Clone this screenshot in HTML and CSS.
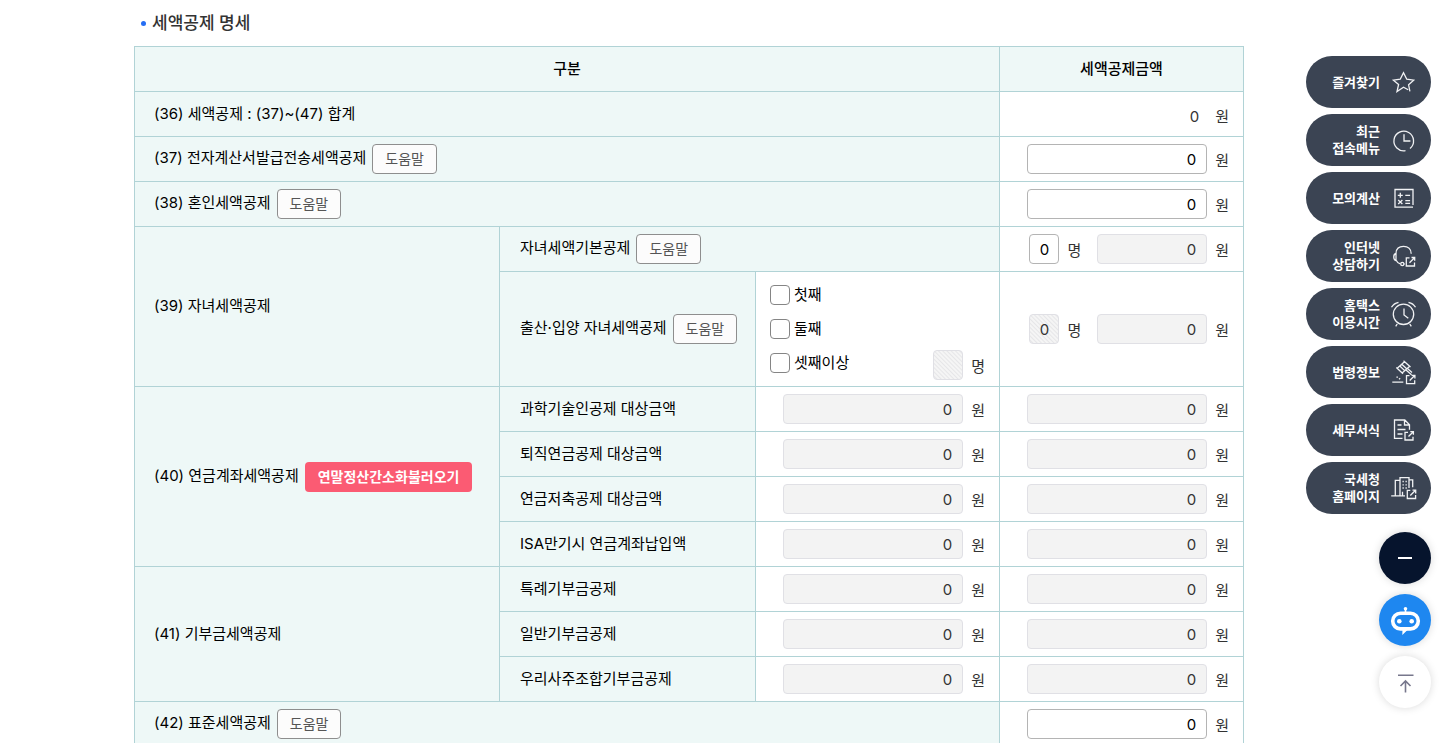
FILE: index.html
```html
<!DOCTYPE html>
<html lang="ko">
<head>
<meta charset="utf-8">
<meta name="viewport" content="width=device-width, initial-scale=1">
<title>세액공제 명세</title>
<link rel="stylesheet" href="styles.css">
</head>
<body>
<main class="content">
  <h2 class="section-title">세액공제 명세</h2>
  <table class="deduction">
    <colgroup><col><col class="col-item"><col class="col-value"><col class="col-value"></colgroup>
    <thead>
      <tr><th colspan="3" scope="col">구분</th><th scope="col">세액공제금액</th></tr>
    </thead>
    <tbody>
      <tr>
        <th colspan="3" scope="row">(36) 세액공제 : (37)~(47) 합계</th>
        <td><div class="field sum"><output class="total">0</output><span class="unit">원</span></div></td>
      </tr>
      <tr>
        <th colspan="3" scope="row"><div class="label"><span>(37) 전자계산서발급전송세액공제</span><button class="help" type="button">도움말</button></div></th>
        <td><label class="field"><input class="amount" type="text" value="0" aria-label="전자계산서발급전송세액공제"><span class="unit">원</span></label></td>
      </tr>
      <tr>
        <th colspan="3" scope="row"><div class="label"><span>(38) 혼인세액공제</span><button class="help" type="button">도움말</button></div></th>
        <td><label class="field"><input class="amount" type="text" value="0" aria-label="혼인세액공제"><span class="unit">원</span></label></td>
      </tr>
      <tr>
        <th rowspan="2" scope="rowgroup">(39) 자녀세액공제</th>
        <th class="item" colspan="2" scope="row"><div class="label"><span>자녀세액기본공제</span><button class="help" type="button">도움말</button></div></th>
        <td><div class="pair">
          <label class="field"><input class="count" type="text" value="0" aria-label="자녀 수"><span class="unit">명</span></label>
          <label class="field"><input class="amount short" type="text" value="0" readonly aria-label="자녀세액기본공제"><span class="unit">원</span></label>
        </div></td>
      </tr>
      <tr>
        <th class="item" scope="row"><div class="label"><span>출산·입양 자녀세액공제</span><button class="help" type="button">도움말</button></div></th>
        <td>
          <div class="births">
            <label class="check"><input type="checkbox"><span>첫째</span></label>
            <label class="check"><input type="checkbox"><span>둘째</span></label>
            <div class="third">
              <label class="check"><input type="checkbox"><span>셋째이상</span></label>
              <label class="field"><input class="count" type="text" disabled aria-label="셋째이상 자녀 수"><span class="unit">명</span></label>
            </div>
          </div>
        </td>
        <td><div class="pair">
          <label class="field"><input class="count" type="text" value="0" disabled aria-label="출산·입양 자녀 수"><span class="unit">명</span></label>
          <label class="field"><input class="amount short" type="text" value="0" readonly aria-label="출산·입양 자녀세액공제"><span class="unit">원</span></label>
        </div></td>
      </tr>
      <tr>
        <th rowspan="4" scope="rowgroup"><div class="label"><span>(40) 연금계좌세액공제</span><button class="load" type="button">연말정산간소화불러오기</button></div></th>
        <th class="item" scope="row">과학기술인공제 대상금액</th>
        <td><label class="field"><input class="amount" type="text" value="0" readonly aria-label="과학기술인공제 대상금액"><span class="unit">원</span></label></td>
        <td><label class="field"><input class="amount" type="text" value="0" readonly aria-label="과학기술인공제 세액공제금액"><span class="unit">원</span></label></td>
      </tr>
      <tr>
        <th class="item" scope="row">퇴직연금공제 대상금액</th>
        <td><label class="field"><input class="amount" type="text" value="0" readonly aria-label="퇴직연금공제 대상금액"><span class="unit">원</span></label></td>
        <td><label class="field"><input class="amount" type="text" value="0" readonly aria-label="퇴직연금공제 세액공제금액"><span class="unit">원</span></label></td>
      </tr>
      <tr>
        <th class="item" scope="row">연금저축공제 대상금액</th>
        <td><label class="field"><input class="amount" type="text" value="0" readonly aria-label="연금저축공제 대상금액"><span class="unit">원</span></label></td>
        <td><label class="field"><input class="amount" type="text" value="0" readonly aria-label="연금저축공제 세액공제금액"><span class="unit">원</span></label></td>
      </tr>
      <tr>
        <th class="item" scope="row">ISA만기시 연금계좌납입액</th>
        <td><label class="field"><input class="amount" type="text" value="0" readonly aria-label="ISA만기시 연금계좌납입액"><span class="unit">원</span></label></td>
        <td><label class="field"><input class="amount" type="text" value="0" readonly aria-label="ISA만기시 세액공제금액"><span class="unit">원</span></label></td>
      </tr>
      <tr>
        <th rowspan="3" scope="rowgroup">(41) 기부금세액공제</th>
        <th class="item" scope="row">특례기부금공제</th>
        <td><label class="field"><input class="amount" type="text" value="0" readonly aria-label="특례기부금공제 대상금액"><span class="unit">원</span></label></td>
        <td><label class="field"><input class="amount" type="text" value="0" readonly aria-label="특례기부금공제 세액공제금액"><span class="unit">원</span></label></td>
      </tr>
      <tr>
        <th class="item" scope="row">일반기부금공제</th>
        <td><label class="field"><input class="amount" type="text" value="0" readonly aria-label="일반기부금공제 대상금액"><span class="unit">원</span></label></td>
        <td><label class="field"><input class="amount" type="text" value="0" readonly aria-label="일반기부금공제 세액공제금액"><span class="unit">원</span></label></td>
      </tr>
      <tr>
        <th class="item" scope="row">우리사주조합기부금공제</th>
        <td><label class="field"><input class="amount" type="text" value="0" readonly aria-label="우리사주조합기부금공제 대상금액"><span class="unit">원</span></label></td>
        <td><label class="field"><input class="amount" type="text" value="0" readonly aria-label="우리사주조합기부금공제 세액공제금액"><span class="unit">원</span></label></td>
      </tr>
      <tr>
        <th colspan="3" scope="row"><div class="label"><span>(42) 표준세액공제</span><button class="help" type="button">도움말</button></div></th>
        <td><label class="field"><input class="amount" type="text" value="0" aria-label="표준세액공제"><span class="unit">원</span></label></td>
      </tr>
    </tbody>
  </table>
</main>

<aside class="quick">
  <nav class="quick-links">
    <a class="pill" href="#"><span>즐겨찾기</span>
      <svg viewBox="0 0 28 28"><path d="M18.2 21.8l-4.7-2.6L7 23.6l1.6-7.2-5.2-4.2 6.8-1 3.3-6.6 3.3 6.6 6.9 1-5.1 4.6 1.3 6.6"/></svg></a>
    <a class="pill" href="#"><span>최근<br>접속메뉴</span>
      <svg viewBox="0 0 28 28"><path d="M15.5 24.6A9.8 9.8 0 1 1 20 22.5M14 8.3V15h6.4"/></svg></a>
    <a class="pill" href="#"><span>모의계산</span>
      <svg viewBox="0 0 28 28"><path d="M23 21V5.5H5v17.7h18M7.8 11.3h5M10.3 8.8v5M15.3 11.3h4.8M8.2 16l4.2 4M12.4 16l-4.2 4M15.3 16.6h4.8M15.3 19.4h4.8"/></svg></a>
    <a class="pill" href="#"><span>인터넷<br>상담하기</span>
      <svg viewBox="0 0 28 28"><path d="M6 11.5C6 6.5 9 4.3 13.5 4.3s7.7 2.4 7.7 7.4M6 11.5c-3 .6-3 6.5 0 7.1v-7.1M6.3 18.6c.8 1.8 2 2.8 4 3.3M14.5 22h.5M19.5 15.8h-3.2V24h8.200v-3.500M19.500 20.700l5-5M21.500 15.500h3.200v3.200"/><circle cx="12.300" cy="22" r="1.600"/></svg></a>
    <a class="pill" href="#"><span>홈택스<br>이용시간</span>
      <svg viewBox="0 0 28 28"><circle cx="13.500" cy="14.300" r="10.200"/><path d="M14 8.500V15l4.300 3.300M1.500 7.300c1.300-2.400 3.600-4.300 7-5M25.500 7.300c-1.300-2.400-3.600-4.300-7-5M7.200 24l-1.500 2.400M19.800 24l1.500 2.400"/></svg></a>
    <a class="pill" href="#"><span>법령정보</span>
      <svg viewBox="0 0 28 28"><path d="M13.500 2.800l7 6.300M6.300 9.600l6.700 6.200M14.500 3.800L7.500 10M19.400 8.400l-7 6.400M11.800 6.200l4.900 4.600M9.800 8l4.900 4.600M16 12l5.500 4.700M17.500 10.500l4.500 4M2.300 24.200h11M6.500 18.800l1.300.5M9 21.300l1.200-1M19.500 17.700h-3v8h8.200v-3.400M19.700 22.500l5-5M21.600 17.300h3.300v3.200"/></svg></a>
    <a class="pill" href="#"><span>세무서식</span>
      <svg viewBox="0 0 28 28"><path d="M12.500 22.300h-8V4h10.300l4.700 4.700v5M14.500 4v5h5M7.500 9h4M7.500 13.500h8M7.500 18h5M18 16.300h-3V24h8v-3.300M18.500 20.500l4.800-4.800M20.300 15.600h3.100v3.100"/></svg></a>
    <a class="pill" href="#"><span>국세청<br>홈페이지</span>
      <svg viewBox="0 0 28 28"><path d="M1.200 21.800H15M5.300 21.800V6.300H10M10 21.800V3.700h9V14M19 5.800h3.700v7.500M12.500 21.800v-4M12.500 7.500h1.300M15.500 7.500h1.300M12.500 10.800h1.300M15.500 10.800h1.300M12.500 14h1.300M15.500 14h1.300M20.300 16.300h-3v8.200h8.300V21M20.300 21.500l5.200-5.200M22.500 16.200h3.200v3.200"/></svg></a>
  </nav>
  <button class="round dark" type="button" aria-label="접기"><svg viewBox="0 0 52 52"><path d="M19 26h14" stroke="#fff" stroke-width="2"/></svg></button>
  <button class="round blue" type="button" aria-label="챗봇"><svg viewBox="0 0 52 52"><g fill="#fff"><circle cx="26.500" cy="14.800" r="1.800"/><path d="M25.700 15h1.600v4h-1.600zM23.500 35h6l-6.200 6z"/></g><rect x="13.700" y="19.300" width="25.600" height="15.600" rx="7.800" fill="#1e87f0" stroke="#fff" stroke-width="3.600"/><circle cx="20.300" cy="27.200" r="2.300" fill="#fff"/><circle cx="32.700" cy="27.200" r="2.300" fill="#fff"/></svg></button>
  <button class="round white" type="button" aria-label="맨 위로"><svg viewBox="0 0 52 52"><path d="M19 19.200h15.500M26.500 36.500V25M21.500 30l5-5 5 5" fill="none" stroke="#77778c" stroke-width="1.600"/></svg></button>
</aside>
</body>
</html>
```
FILE: styles.css
```css
* { box-sizing: border-box; }

body {
  margin: 0;
  background: #fff;
  color: #000;
  font: 400 15px/22px Inter, "Noto Sans CJK KR", sans-serif;
}

button, input {
  font: inherit;
  margin: 0;
}

.content { padding: 12px 202px 0 134px; }

.section-title {
  display: flex;
  align-items: center;
  gap: 6px;
  margin: 0 0 12px;
  padding-left: 7px;
  color: #333;
  font-size: 17px;
  font-weight: 500;
  line-height: 22px;
}

.section-title::before {
  content: "";
  width: 5px;
  height: 5px;
  border-radius: 50%;
  background: #256ef4;
}

.deduction {
  width: 100%;
  table-layout: fixed;
  border-collapse: collapse;
}

.col-item { width: 256px; }
.col-value { width: 244px; }

.deduction th,
.deduction td {
  height: 45px;
  padding: 0;
  border: 1px solid #b1d3d6;
  vertical-align: middle;
}

.deduction th {
  padding: 0 16px 1px 19px;
  background: #eef8f7;
  font-weight: 400;
  text-align: left;
}

.deduction thead th {
  padding: 0 0 1px;
  font-weight: 500;
  text-align: center;
}

.deduction .item { padding-left: 20px; }

.label {
  display: flex;
  gap: 6px;
  padding-top: 1px;
}

.label span { padding: 3px 0 5px; }

.help,
.load {
  height: 30px;
  padding: 0 12px;
  border: 1px solid #8e8e8e;
  border-radius: 4px;
  background: #fcfcfc;
  color: #555;
  font-size: 14px;
  font-weight: 400;
  line-height: 20px;
  white-space: nowrap;
}

.load {
  padding: 0 13px;
  border: 0;
  background: #fb5b73;
  color: #fff;
  font-weight: 700;
}

.field {
  display: flex;
  justify-content: flex-end;
  align-items: center;
  gap: 8px;
  height: 30px;
  padding-right: 14px;
}

.unit {
  padding-top: 3px;
  color: #333;
}

.sum { padding-top: 3px; }

.total {
  padding: 3px 8px 0 0;
  color: #333;
}

.amount,
.count {
  width: 180px;
  height: 30px;
  padding: 0 10px;
  border: 1px solid #b4b4b4;
  border-radius: 4px;
  background: #fff;
  color: #000;
  text-align: right;
}

.short { width: 110px; }

.count {
  width: 30px;
  padding: 0;
  text-align: center;
}

.amount:read-only {
  border-color: #e0e0e5;
  background: #f3f3f3;
  color: #333;
}

.count:disabled {
  border-color: #e0e0e5;
  background: repeating-linear-gradient(45deg, #f5f5f5 0 1px, #e6e6e8 2px, #f5f5f5 3px);
  color: #333;
}

.pair {
  display: flex;
  justify-content: flex-end;
  gap: 2px;
}

.births { padding: 6px 0 6px 14px; }

.check {
  display: flex;
  align-items: center;
  gap: 4px;
  height: 34px;
}

.check span { padding-bottom: 1px; }

.check input {
  appearance: none;
  width: 20px;
  height: 20px;
  border: 1px solid #858585;
  border-radius: 4px;
  background: #fff;
}

.third {
  display: flex;
  justify-content: space-between;
  align-items: flex-end;
}

.quick {
  position: fixed;
  top: 56px;
  right: 15px;
  display: flex;
  flex-direction: column;
  align-items: flex-end;
  gap: 10px;
}

.quick-links {
  display: flex;
  flex-direction: column;
  gap: 6px;
  margin-bottom: 8px;
}

.pill {
  display: flex;
  justify-content: flex-end;
  align-items: center;
  gap: 10px;
  width: 125px;
  height: 52px;
  padding-right: 13px;
  border-radius: 26px;
  background: #3b4453;
  color: #fff;
  font-size: 13px;
  font-weight: 700;
  line-height: 17px;
  text-align: right;
  text-decoration: none;
}

.pill svg {
  width: 28px;
  height: 28px;
  fill: none;
  stroke: #f1f2f4;
  stroke-width: 1.3;
}

.round {
  width: 52px;
  height: 52px;
  padding: 0;
  border: 0;
  border-radius: 50%;
  box-shadow: 0 0 8px rgba(0, 0, 0, 0.15);
}

.round svg { display: block; }
.dark { background: #06142d; }
.blue { background: #1e87f0; }
.white { background: #fff; }
```
